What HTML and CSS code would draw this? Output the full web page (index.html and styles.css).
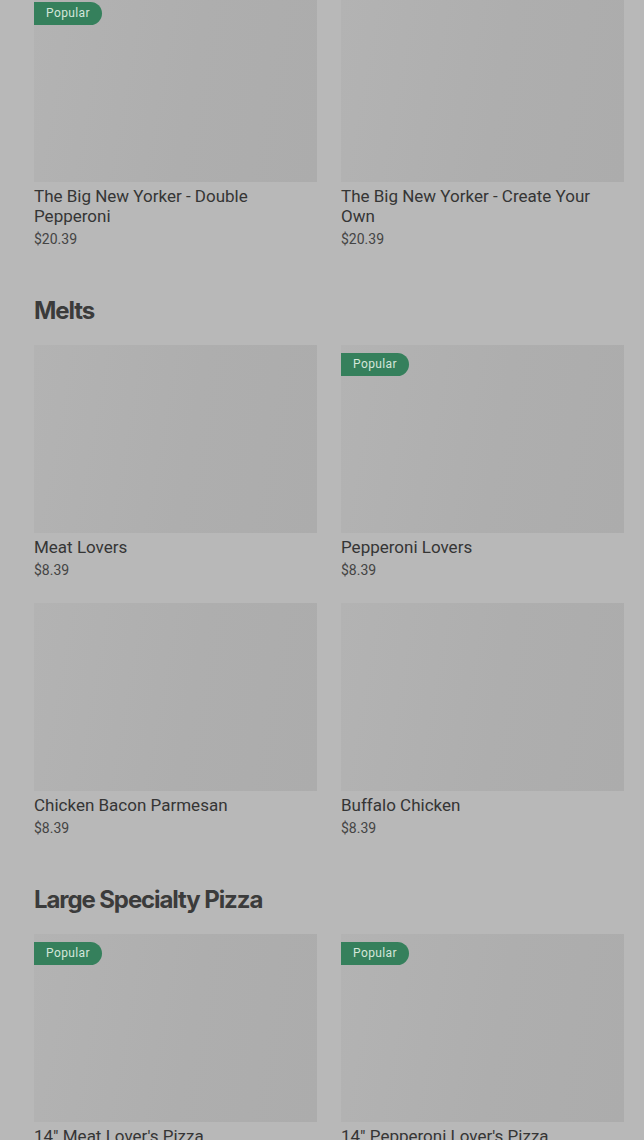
FILE: index.html
```html
<!DOCTYPE html>
<html lang="en">
<head>
    <meta charset="UTF-8">
    <meta name="viewport" content="width=device-width, initial-scale=1.0">
    <title>Menu</title>
    <link rel="stylesheet" href="styles.css">
</head>
<body>
    <main class="menu">
        <section class="menu-section">
            <div class="item-grid">
                <div class="item">
                    <div class="item-photo">
                        <span class="badge">Popular</span>
                    </div>
                    <div class="item-name">The Big New Yorker - Double Pepperoni</div>
                    <div class="item-price">$20.39</div>
                </div>
                <div class="item">
                    <div class="item-photo"></div>
                    <div class="item-name">The Big New Yorker - Create Your Own</div>
                    <div class="item-price">$20.39</div>
                </div>
            </div>
        </section>

        <section class="menu-section">
            <h2>Melts</h2>
            <div class="item-grid">
                <div class="item">
                    <div class="item-photo"></div>
                    <div class="item-name">Meat Lovers</div>
                    <div class="item-price">$8.39</div>
                </div>
                <div class="item">
                    <div class="item-photo">
                        <span class="badge">Popular</span>
                    </div>
                    <div class="item-name">Pepperoni Lovers</div>
                    <div class="item-price">$8.39</div>
                </div>
                <div class="item">
                    <div class="item-photo"></div>
                    <div class="item-name">Chicken Bacon Parmesan</div>
                    <div class="item-price">$8.39</div>
                </div>
                <div class="item">
                    <div class="item-photo"></div>
                    <div class="item-name">Buffalo Chicken</div>
                    <div class="item-price">$8.39</div>
                </div>
            </div>
        </section>

        <section class="menu-section">
            <h2>Large Specialty Pizza</h2>
            <div class="item-grid">
                <div class="item">
                    <div class="item-photo">
                        <span class="badge">Popular</span>
                    </div>
                    <div class="item-name">14" Meat Lover's Pizza</div>
                    <div class="item-price">$20.39</div>
                </div>
                <div class="item">
                    <div class="item-photo">
                        <span class="badge">Popular</span>
                    </div>
                    <div class="item-name">14" Pepperoni Lover's Pizza</div>
                    <div class="item-price">$20.39</div>
                </div>
            </div>
        </section>
    </main>
</body>
</html>
```

FILE: styles.css
```css
body {
    margin: 0;
    padding: 0;
    background-color: #b8b8b8;
    font-family: Roboto, "Liberation Sans", sans-serif;
    color: #3a3a3a;
    overflow: hidden;
}
.menu {
    margin-top: -6px;
    padding: 0 20px 0 34px;
}
.menu-section h2 {
    margin: 46px 0 18px;
    font-family: Inter, "Liberation Sans", sans-serif;
    font-size: 24px;
    line-height: 32px;
    font-weight: 700;
    letter-spacing: -1.1px;
    color: #3b3b3b;
}
.item-grid {
    display: grid;
    grid-template-columns: 1fr 1fr;
    column-gap: 24px;
    row-gap: 23px;
}
.item-photo {
    position: relative;
    height: 188px;
    background: linear-gradient(100deg, #b3b3b3 0%, #aeaeae 55%, #acacac 100%);
}
.badge {
    position: absolute;
    top: 8px;
    left: 0;
    height: 23px;
    padding: 0 12px;
    border-radius: 0 12px 12px 0;
    background-color: #35805c;
    color: #d4e6da;
    font-size: 12px;
    line-height: 23px;
    letter-spacing: 0.4px;
}
.item-name {
    margin-top: 4px;
    font-size: 17px;
    line-height: 20px;
    font-weight: 400;
    color: #353535;
}
.item-price {
    margin-top: 3px;
    font-size: 14px;
    line-height: 20px;
    color: #444444;
}
```
